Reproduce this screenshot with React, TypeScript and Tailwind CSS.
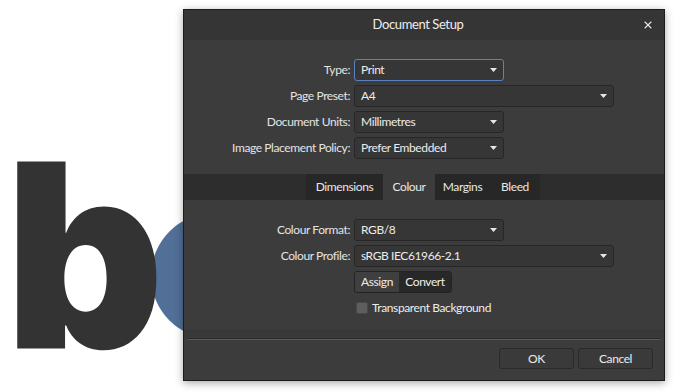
import { X } from 'lucide-react';

function Caret() {
  return (
    <svg width="7" height="4" viewBox="0 0 7 4" className="fill-[#e8e8e8]">
      <path d="M0 0H7L3.5 4Z" />
    </svg>
  );
}

function Select({ value, wide, focused }: { value: string; wide?: boolean; focused?: boolean }) {
  return (
    <div
      className={`h-[22px] ${wide ? 'w-[260px]' : 'w-[150px]'} flex items-center justify-between pl-[6px] pr-[6px] rounded-[3px] border bg-[#363636] ${
        focused ? 'border-[#5b82c0]' : 'border-[#262626]'
      }`}
    >
      <span className="text-[12px] text-[#ececec]">{value}</span>
      <Caret />
    </div>
  );
}

function Row({ label, children }: { label: string; children: React.ReactNode }) {
  return (
    <div className="flex items-center">
      <div className="w-[166px] text-right text-[12px] text-[#e4e4e4]">{label}</div>
      <div className="ml-[4px]">{children}</div>
    </div>
  );
}

export default function App() {
  return (
    <div className="w-[676px] h-[392px] relative bg-white overflow-hidden font-['Lato',sans-serif] tracking-[-0.4px]">
      {/* logo behind the dialog */}
      <div className="absolute left-[151px] top-[213px] w-[126px] h-[126px] rounded-full bg-[#516f97]" />
      <div className="absolute left-[5px] top-[127px] text-[246px] leading-none font-black text-[#333333] font-['Inter',sans-serif] tracking-tight origin-top scale-y-[1.045]">
        b
      </div>

      <div className="absolute left-[183px] top-[9px] w-[482px] h-[372px] flex flex-col border border-[#1c1c1c] bg-[#3c3c3c] shadow-[0_2px_8px_rgba(0,0,0,0.35)]">
        <div className="h-[30px] bg-[#353535] flex items-center justify-center relative">
          <span className="text-[13px] text-[#eeeeee] -ml-[12px]">Document Setup</span>
          <X className="absolute right-[10px] top-[9px] w-[12px] h-[12px] text-[#e8e8e8]" strokeWidth={2.2} />
        </div>

        <div className="pt-[19px] pb-[15px] flex flex-col gap-[4px]">
          <Row label="Type:">
            <Select value="Print" focused />
          </Row>
          <Row label="Page Preset:">
            <Select value="A4" wide />
          </Row>
          <Row label="Document Units:">
            <Select value="Millimetres" />
          </Row>
          <Row label="Image Placement Policy:">
            <Select value="Prefer Embedded" />
          </Row>
        </div>

        <div className="h-[26px] bg-[#2d2d2d] flex pl-[122px]">
          <div className="w-[77px] bg-[#272727] flex items-center justify-center text-[12px] text-[#e8e8e8]">Dimensions</div>
          <div className="w-[52px] bg-[#3c3c3c] flex items-center justify-center text-[12px] text-[#e8e8e8]">Colour</div>
          <div className="w-[55px] bg-[#272727] flex items-center justify-center text-[12px] text-[#e8e8e8]">Margins</div>
          <div className="w-[50px] bg-[#272727] flex items-center justify-center text-[12px] text-[#e8e8e8]">Bleed</div>
        </div>

        <div className="h-[129px] pt-[19px] flex flex-col gap-[4px]">
          <Row label="Colour Format:">
            <Select value="RGB/8" />
          </Row>
          <Row label="Colour Profile:">
            <Select value="sRGB IEC61966-2.1" wide />
          </Row>
          <Row label="">
            <div className="flex h-[22px] rounded-[3px] border border-[#232323] overflow-hidden text-[12px] text-[#ececec]">
              <div className="w-[44px] bg-[#3f3f3f] flex items-center justify-center">Assign</div>
              <div className="w-[52px] bg-[#282828] flex items-center justify-center">Convert</div>
            </div>
          </Row>
          <Row label="">
            <div className="flex items-center gap-[4px] mt-[2px]">
              <div className="w-[12px] h-[12px] rounded-[2px] bg-[#5e5e5e] border border-[#4a4a4a] ml-[2px]" />
              <span className="text-[12px] text-[#ececec]">Transparent Background</span>
            </div>
          </Row>
        </div>

        <div className="h-[9px] bg-[#393939]" />
        <div className="mx-[4px] h-[2px] border-t border-[#2a2a2a] bg-[#595959]" />

        <div className="flex-1 flex justify-end items-start pt-[8px] pr-[11px] gap-[4px]">
          <div className="w-[75px] h-[21px] rounded-[3px] border border-[#2a2a2a] bg-[#3a3a3a] flex items-center justify-center text-[12px] text-[#ececec]">
            OK
          </div>
          <div className="w-[75px] h-[21px] rounded-[3px] border border-[#2a2a2a] bg-[#3a3a3a] flex items-center justify-center text-[12px] text-[#ececec]">
            Cancel
          </div>
        </div>
      </div>
    </div>
  );
}
